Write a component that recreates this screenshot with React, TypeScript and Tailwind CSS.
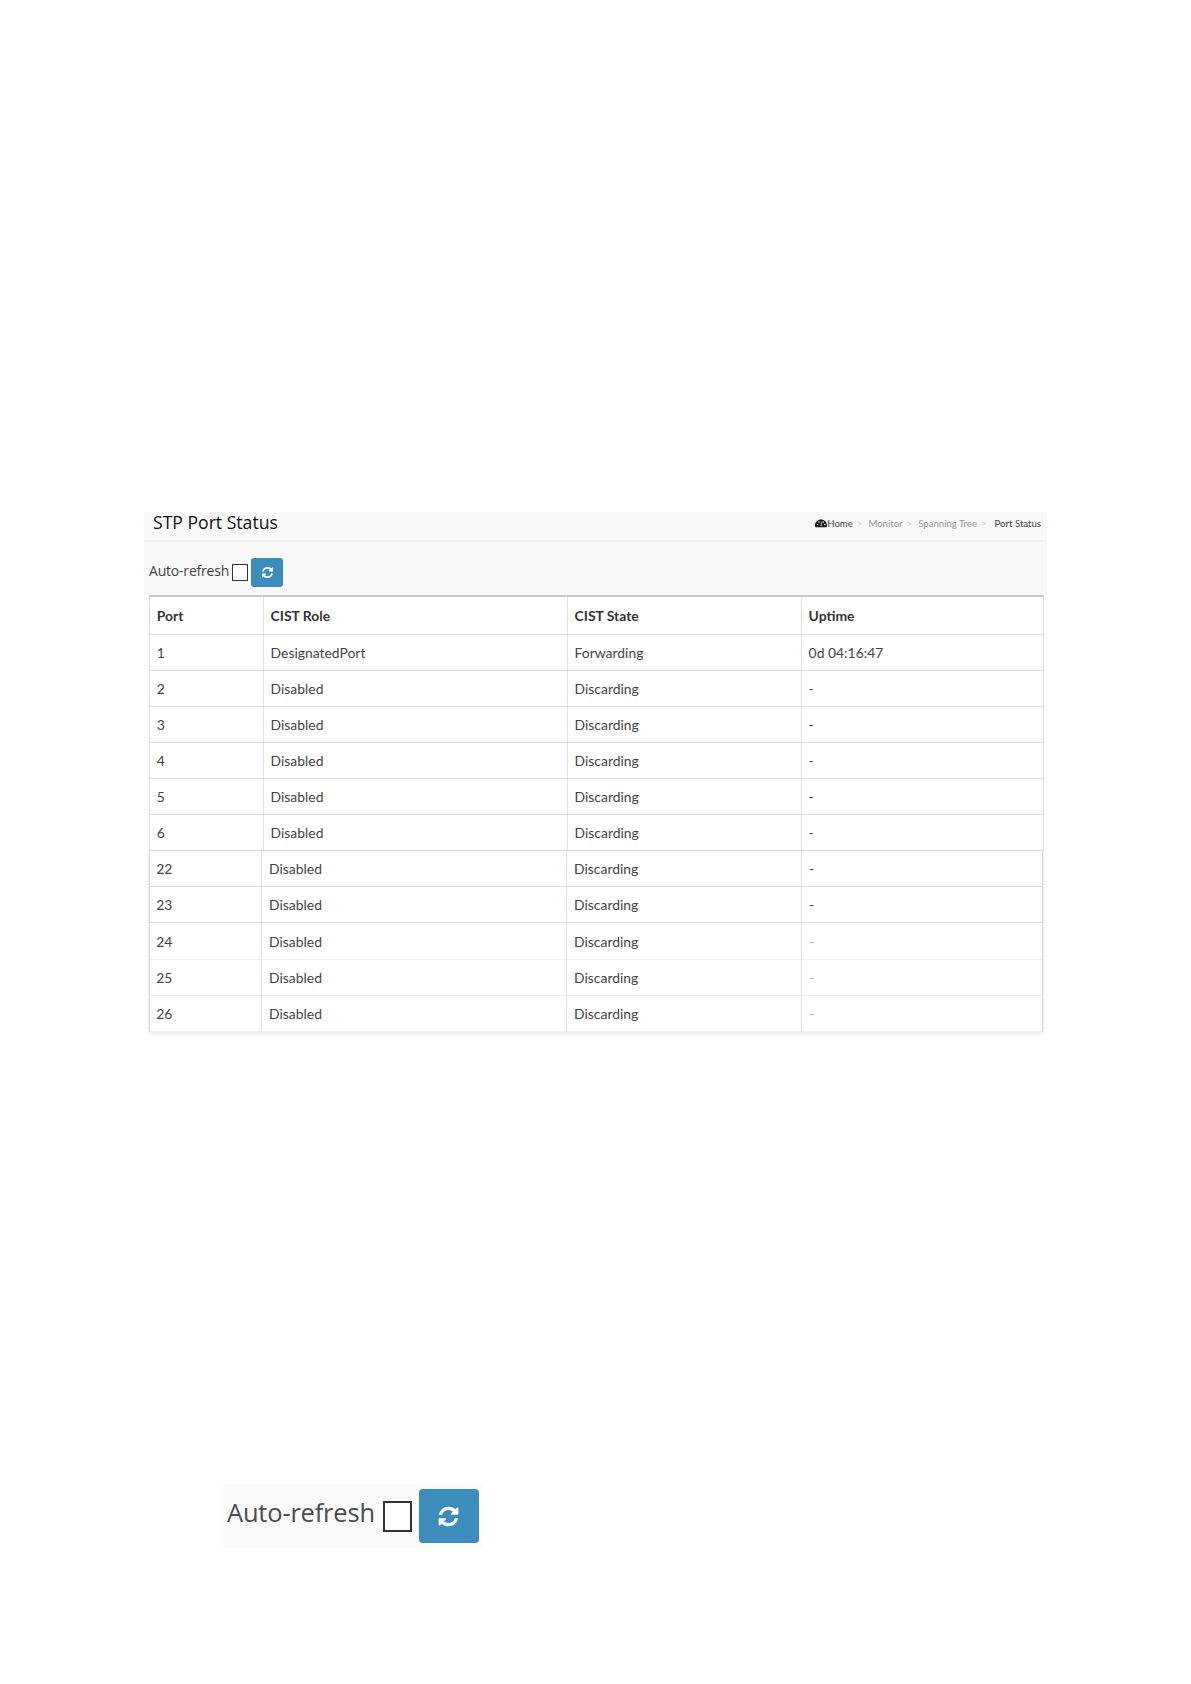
const topRows = [
  ["1", "DesignatedPort", "Forwarding", "0d 04:16:47"],
  ["2", "Disabled", "Discarding", "-"],
  ["3", "Disabled", "Discarding", "-"],
  ["4", "Disabled", "Discarding", "-"],
  ["5", "Disabled", "Discarding", "-"],
  ["6", "Disabled", "Discarding", "-"],
];

const bottomRows = [
  ["22", "Disabled", "Discarding", "-"],
  ["23", "Disabled", "Discarding", "-"],
  ["24", "Disabled", "Discarding", "-"],
  ["25", "Disabled", "Discarding", "-"],
  ["26", "Disabled", "Discarding", "-"],
];

function RefreshIcon({ className }: { className: string }) {
  return (
    <svg viewBox="0 0 1792 1792" fill="currentColor" className={className}>
      <path d="M1639 1056q0 5-1 7-64 268-268 434.5t-478 166.5q-146 0-282.5-55t-243.5-157l-129 129q-19 19-45 19t-45-19-19-45v-448q0-26 19-45t45-19h448q26 0 45 19t19 45-19 45l-137 137q71 66 161 102t187 36q134 0 250-65t186-179q11-17 53-117 8-23 30-23h192q13 0 22.5 9.5t9.5 22.5zm25-800v448q0 26-19 45t-45 19h-448q-26 0-45-19t-19-45 19-45l138-138q-148-137-349-137-134 0-250 65t-186 179q-11 17-53 117-8 23-30 23h-199q-13 0-22.5-9.5t-9.5-22.5v-7q65-268 270-434.5t480-166.5q146 0 284 55.5t245 156.5l130-129q19-19 45-19t45 19 19 45z" />
    </svg>
  );
}

function GaugeIcon() {
  return (
    <svg viewBox="0 0 24 16" className="w-[12px] h-[9px] text-[#1a1a1a]" fill="currentColor">
      <path d="M12 0C5.4 0 0 5.2 0 11.6c0 1.5.3 2.9.8 4.1h22.4c.5-1.2.8-2.6.8-4.1C24 5.2 18.6 0 12 0z" />
      <circle cx="5" cy="10" r="1.6" fill="#f8f8f8" />
      <circle cx="8" cy="5" r="1.6" fill="#f8f8f8" />
      <circle cx="16.5" cy="5" r="1.6" fill="#f8f8f8" />
      <circle cx="19.5" cy="10" r="1.6" fill="#f8f8f8" />
      <path d="M11 13l2.5-9 1 .3-1.5 9z" fill="#f8f8f8" />
    </svg>
  );
}

function Row({ cells, top, head, faint }: { cells: string[]; top?: boolean; head?: boolean; faint?: boolean }) {
  const cols = top ? "grid-cols-[112.3px_304px_234px_1fr]" : "grid-cols-[111.4px_305px_235px_1fr]";
  const height = head ? "h-[37.5px]" : top ? "h-[36.1px]" : "h-[36.2px]";
  const line = faint ? "border-[#ededed]" : "border-[#dedede]";
  return (
    <div className={`grid ${cols} ${height} border-b ${line} text-[13.9px] ${head ? "font-bold text-[#333]" : "text-[#444]"}`}>
      {cells.map((c, i) => (
        <div
          key={i}
          className={`flex items-center pt-[2px] ${i > 0 ? "pl-[7px] border-l border-[#e2e2e2]" : "pl-[6.5px]"} ${faint && i === 3 ? "text-[#aaa]" : ""}`}
        >
          {c}
        </div>
      ))}
    </div>
  );
}

export default function App() {
  return (
    <div className="w-[1191px] h-[1684px] bg-white overflow-hidden pt-[512px] font-['Lato','Open_Sans',sans-serif]">
      <div className="ml-[144px] w-[903px]">
        <div className="bg-[#f8f8f8]">
          <div className="h-[30px] pb-[7px] pl-[9px] pr-[6px] flex items-center justify-between border-b-2 border-[#efefef]">
            <div className="text-[17.6px] text-[#111] font-['Open_Sans',sans-serif]">STP Port Status</div>
            <div className="flex items-center text-[9.6px] mt-[3px]">
              <GaugeIcon />
              <span className="text-[#444]">Home</span>
              <span className="text-[#ccc] mx-[4px]">&gt;</span>
              <span className="text-[#999] ml-[2px]">Monitor</span>
              <span className="text-[#ccc] mx-[4px]">&gt;</span>
              <span className="text-[#999] ml-[2px]">Spanning Tree</span>
              <span className="text-[#ccc] mx-[4px]">&gt;</span>
              <span className="text-[#444] ml-[4px]">Port Status</span>
            </div>
          </div>
          <div className="h-[53px] pl-[5px] pt-[16px] flex items-start">
            <span className="text-[14px] mt-[2px] leading-[22px] text-[#444] mr-[3px] font-['Open_Sans',sans-serif] tracking-[-0.2px] whitespace-nowrap">Auto-refresh</span>
            <div className="w-[16px] h-[17px] mt-[6px] bg-white border border-[#333]" />
            <button className="ml-[3px] w-[32px] h-[29px] bg-[#3c8dbc] rounded-[3px] flex items-center justify-center text-white">
              <RefreshIcon className="w-[13px] h-[13px]" />
            </button>
          </div>
        </div>
        <div className="ml-[5.3px] w-[895px] bg-white border-t-[2px] border-[#c8c8c8] border-x border-x-[#dcdcdc]">
          <Row top head cells={["Port", "CIST Role", "CIST State", "Uptime"]} />
          {topRows.map((r) => (
            <Row key={r[0]} top cells={r} />
          ))}
        </div>
        <div className="ml-[4.7px] w-[894.6px] bg-white border-x border-x-[#dcdcdc] shadow-[0_2px_5px_rgba(0,0,0,0.1)]">
          {bottomRows.map((r) => (
            <Row key={r[0]} cells={r} faint={Number(r[0]) > 23} />
          ))}
        </div>
      </div>

      <div className="mt-[452px] ml-[223px] w-[259px] h-[64px] bg-[#fafafa] flex items-center pl-[4px]">
        <span className="text-[25.5px] text-[#4c4c4c] font-['Open_Sans',sans-serif] tracking-[-0.2px] mr-[8px] mb-[8px] whitespace-nowrap">Auto-refresh</span>
        <div className="w-[29px] h-[31px] bg-white border-2 border-[#333]" />
        <button className="ml-[7px] w-[60px] h-[54px] bg-[#3c8dbc] rounded-[4px] flex items-center justify-center text-white">
          <RefreshIcon className="w-[23px] h-[23px]" />
        </button>
      </div>
    </div>
  );
}
